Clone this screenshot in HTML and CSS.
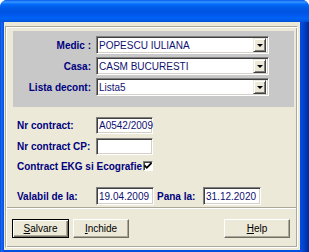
FILE: index.html
```html
<html lang="ro">
<head>
    <meta charset="UTF-8">
    <title>Contract</title>
    <link rel="stylesheet" href="styles.css">
</head>
<body>

    <div class="window">
        <div class="titlebar"></div>

        <div class="client">
            <div class="frame">

                <div class="top-panel">
                    <div class="combo-row">
                        <span class="label right">Medic :</span>
                        <div class="combo"><span>POPESCU IULIANA</span><i class="drop"></i></div>
                    </div>
                    <div class="combo-row">
                        <span class="label right">Casa:</span>
                        <div class="combo"><span>CASM BUCURESTI</span><i class="drop"></i></div>
                    </div>
                    <div class="combo-row">
                        <span class="label right">Lista decont:</span>
                        <div class="combo"><span>Lista5</span><i class="drop"></i></div>
                    </div>
                </div>

                <div class="fields">
                    <div class="field-row">
                        <span class="label wide">Nr contract:</span>
                        <div class="edit w57">A0542/2009</div>
                    </div>
                    <div class="field-row second">
                        <span class="label wide">Nr contract CP:</span>
                        <div class="edit w57"></div>
                    </div>
                    <div class="check-row">
                        <span class="label">Contract EKG si Ecografie</span>
                        <span class="checkbox">
                            <svg width="8" height="8" viewBox="0 0 8 8"><polyline points="0.5,3.5 2.8,5.8 7.5,1" fill="none" stroke="#000" stroke-width="1.8"/></svg>
                        </span>
                    </div>
                    <div class="field-row dates">
                        <span class="label wide">Valabil de la:</span>
                        <div class="edit w58">19.04.2009</div>
                        <span class="label pana">Pana la:</span>
                        <div class="edit w58">31.12.2020</div>
                    </div>
                </div>

                <div class="separator"></div>

                <div class="button-bar">
                    <button class="btn default w57"><u>S</u>alvare</button>
                    <button class="btn w56 next"><u>I</u>nchide</button>
                    <button class="btn w66 help"><u>H</u>elp</button>
                </div>

            </div>
        </div>
    </div>

</body>
</html>
```

FILE: styles.css
```css
*{
    margin:0;
    padding:0;
    box-sizing:border-box;
}

body{
    width:309px;
    height:252px;
    overflow:hidden;
    background:#fff;
    font-family:"Liberation Sans", Arial, sans-serif;
    font-size:10px;
}

.window{
    width:309px;
    height:252px;
    display:flex;
    flex-direction:column;
    border-radius:7px 7px 0 0;
    overflow:hidden;
    background:linear-gradient(to right, #0838c8 0, #1a6cf5 1px, #0a5ae8 3px, #0050e0 4px, #0050e0 300px, #0348d8 302px, #0038b8 306px, #002a98 309px);
}

.titlebar{
    height:22px;
    background:linear-gradient(to bottom, #0058ee 0, #3d95ff 2px, #1c82ff 3px, #036ffc 4px, #0262ee 6px, #0057e5 9px, #0054e3 12px, #0058ec 15px, #0063f8 18px, #005de8 20px, #0050d6 22px);
}

.client{
    flex:1;
    margin:0 9px 2px 4px;
    background:#ece9d8;
    padding:4px 2px 2px 1px;
    display:flex;
}

/* etched frame around everything */
.frame{
    flex:1;
    display:flex;
    flex-direction:column;
    border:1px solid;
    border-color:#aca899 #fff #fff #aca899;
    box-shadow:inset 1px 1px #fff, inset -1px -1px #aca899;
    padding:1px;
}

.label{
    font-weight:bold;
    color:#000080;
    white-space:nowrap;
}

.top-panel{
    margin:3px 2px 0 6px;
    background:#c8c8c8;
    padding:5px 0 11px 0;
}

.combo-row{
    display:flex;
    align-items:center;
    height:18px;
    margin-bottom:3px;
}

.combo-row:last-child{
    margin-bottom:0;
}

.right{
    width:78px;
    text-align:right;
}

.combo, .edit{
    height:18px;
    background:#fff;
    border:1px solid;
    border-color:#808080 #fff #fff #808080;
    box-shadow:inset 1px 1px #404040, inset -1px -1px #d4d0c8;
    color:#101070;
    display:flex;
    align-items:center;
    padding-left:2px;
    white-space:nowrap;
}

.combo{
    width:173px;
    margin-left:5px;
    justify-content:space-between;
    padding:2px;
}

.drop{
    width:13px;
    height:14px;
    background:#ece9d8;
    border:1px solid;
    border-color:#ece9d8 #404040 #404040 #ece9d8;
    box-shadow:inset 1px 1px #fff, inset -1px -1px #808080;
    display:flex;
    align-items:center;
    justify-content:center;
}

.drop::after{
    content:"";
    border-left:3px solid transparent;
    border-right:3px solid transparent;
    border-top:3px solid #000;
    margin-top:1px;
}

.fields{
    padding:10px 0 0 10px;
}

.field-row{
    display:flex;
    align-items:center;
    height:17px;
}

.field-row .edit{
    height:17px;
}

.second{
    margin-top:4px;
}

.wide{
    width:79px;
}

.w57{
    width:57px;
}

.w58{
    width:58px;
}

.check-row{
    display:flex;
    align-items:center;
    height:10px;
    margin-top:6px;
}

.checkbox{
    width:10px;
    height:10px;
    margin-left:1px;
    background:#fff;
    border:1px solid;
    border-color:#808080 #fff #fff #808080;
    box-shadow:inset 1px 1px #404040;
    display:flex;
    align-items:center;
    justify-content:center;
}

.dates{
    margin-top:16px;
    height:18px;
}

.dates .edit{
    height:18px;
}

.pana{
    width:46px;
    margin-left:3px;
}

.separator{
    height:2px;
    margin-top:2px;
    border-top:1px solid #aca899;
    border-bottom:1px solid #fff;
}

.button-bar{
    display:flex;
    padding:10px 6px 0 5px;
}

.btn{
    height:19px;
    font-family:"Liberation Sans", Arial, sans-serif;
    font-size:10px;
    color:#000;
    background:#ece9d8;
    border:1px solid;
    border-color:#fff #716f64 #716f64 #fff;
    box-shadow:inset -1px -1px #aca899;
}

.btn.default{
    border-color:#000;
    box-shadow:inset 1px 1px #fff, inset -1px -1px #716f64, inset -2px -2px #aca899;
}

.w56{
    width:56px;
}

.w66{
    width:66px;
}

.next{
    margin-left:4px;
}

.help{
    margin-left:auto;
}
```
